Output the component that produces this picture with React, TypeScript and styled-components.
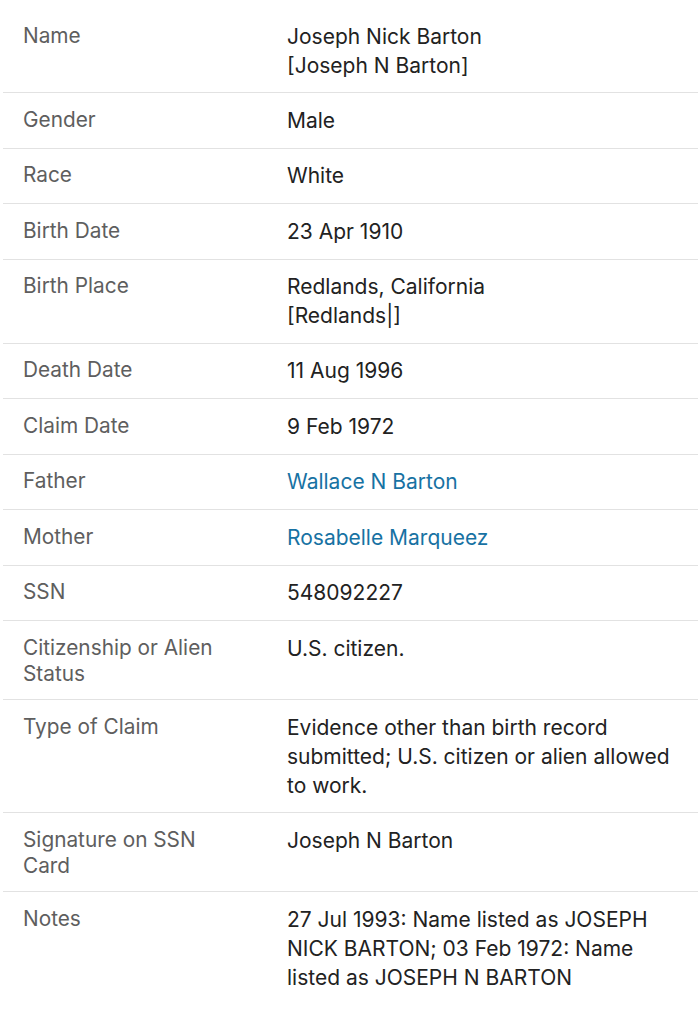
import React, {ReactElement} from "react";
import styled, {createGlobalStyle} from "styled-components";

interface Fact {
    label: string
    lines: string[]
    link?: boolean
}

const facts: Fact[] = [
    {label: "Name", lines: ["Joseph Nick Barton", "[Joseph N Barton]"]},
    {label: "Gender", lines: ["Male"]},
    {label: "Race", lines: ["White"]},
    {label: "Birth Date", lines: ["23 Apr 1910"]},
    {label: "Birth Place", lines: ["Redlands, California", "[Redlands|]"]},
    {label: "Death Date", lines: ["11 Aug 1996"]},
    {label: "Claim Date", lines: ["9 Feb 1972"]},
    {label: "Father", lines: ["Wallace N Barton"], link: true},
    {label: "Mother", lines: ["Rosabelle Marqueez"], link: true},
    {label: "SSN", lines: ["548092227"]},
    {label: "Citizenship or Alien Status", lines: ["U.S. citizen."]},
    {label: "Type of Claim", lines: ["Evidence other than birth record submitted; U.S. citizen or alien allowed to work."]},
    {label: "Signature on SSN Card", lines: ["Joseph N Barton"]},
    {label: "Notes", lines: ["27 Jul 1993: Name listed as JOSEPH NICK BARTON; 03 Feb 1972: Name listed as JOSEPH N BARTON"]},
];

const GlobalStyle = createGlobalStyle`
  body {
    margin: 0;
    background: #ffffff;
    font-family: Inter, "Liberation Sans", sans-serif;
  }
`;

const Page = styled.div`
  padding: 9px 0 0 3px;
`;

const FactTable = styled.div`
  display: flex;
  flex-direction: column;
`;

const FactRow = styled.div`
  display: grid;
  grid-template-columns: 284px 1fr;
  box-sizing: border-box;
  min-height: 55.5px;
  border-bottom: 1px solid #e2e2e2;
  padding: 12.5px 14px 12.5px 0;

  &:last-child {
    border-bottom: none;
  }
`;

const Label = styled.div`
  padding: 1px 54px 0 20px;
  font-size: 20.8px;
  line-height: 26px;
  color: #5e5e5e;
`;

const Value = styled.div`
  font-size: 21px;
  line-height: 29px;
  color: #222222;
`;

const Link = styled.a`
  color: #1772a3;
  text-decoration: none;
`;

function App(): ReactElement {
    return (
        <>
            <GlobalStyle/>
            <Page>
                <FactTable>
                    {facts.map((fact) => (
                        <FactRow key={fact.label}>
                            <Label>{fact.label}</Label>
                            <Value>
                                {fact.lines.map((line) => (
                                    <div key={line}>
                                        {fact.link ? <Link href="#">{line}</Link> : line}
                                    </div>
                                ))}
                            </Value>
                        </FactRow>
                    ))}
                </FactTable>
            </Page>
        </>
    );
}

export default App;
